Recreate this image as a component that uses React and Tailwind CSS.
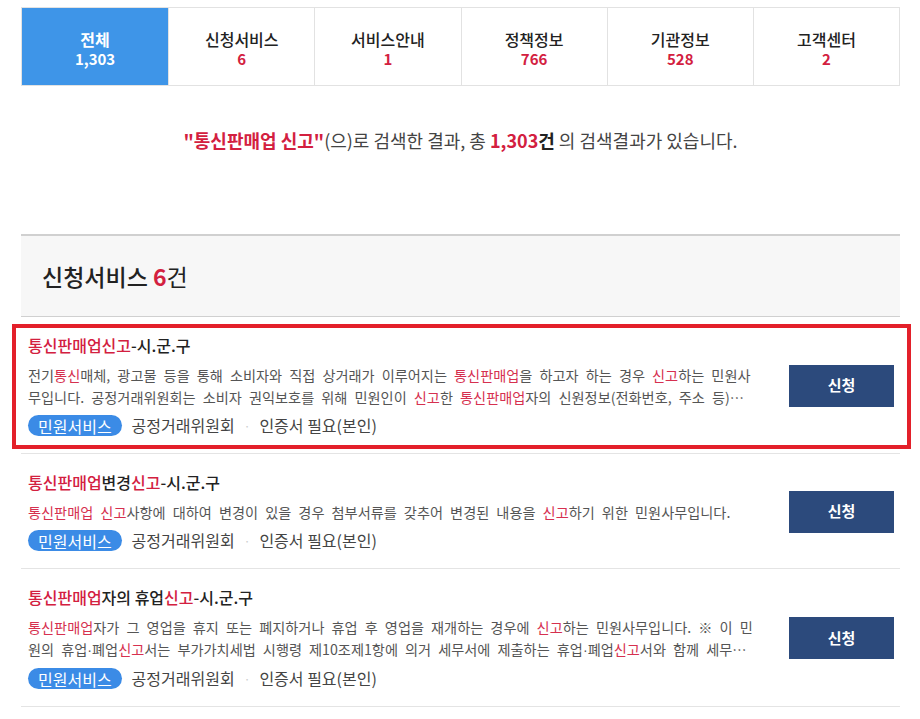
import React from "react";

const tabs = [
  { label: "전체", count: "1,303", active: true },
  { label: "신청서비스", count: "6" },
  { label: "서비스안내", count: "1" },
  { label: "정책정보", count: "766" },
  { label: "기관정보", count: "528" },
  { label: "고객센터", count: "2" },
];

// Splits text on [[...]] markers so keyword hits render in red;
// middle dots get a Latin face so they stay narrow
function Hl({ text, cls }) {
  const parts = text.split(/(\[\[.*?\]\]|·)/g);
  return (
    <>
      {parts.map((p, i) =>
        p.startsWith("[[") ? (
          <span key={i} className={cls}>
            {p.slice(2, -2)}
          </span>
        ) : p === "·" ? (
          <span key={i} className="font-['Liberation_Sans']">·</span>
        ) : (
          <React.Fragment key={i}>{p}</React.Fragment>
        )
      )}
    </>
  );
}

const items = [
  {
    title: "[[통신판매업신고]]-시.군.구",
    desc:
      "전기[[통신]]매체, 광고물 등을 통해 소비자와 직접 상거래가 이루어지는 [[통신판매업]]을 하고자 하는 경우 [[신고]]하는 민원사무입니다. 공정거래위원회는 소비자 권익보호를 위해 민원인이 [[신고]]한 [[통신판매업]]자의 신원정보(전화번호, 주소 등)를 공개하고 있습니다.",
    highlight: true,
  },
  {
    title: "[[통신판매업]]변경[[신고]]-시.군.구",
    desc:
      "[[통신판매업 신고]]사항에 대하여 변경이 있을 경우 첨부서류를 갖추어 변경된 내용을 [[신고]]하기 위한 민원사무입니다.",
  },
  {
    title: "[[통신판매업]]자의 휴업[[신고]]-시.군.구",
    desc:
      "[[통신판매업]]자가 그 영업을 휴지 또는 폐지하거나 휴업 후 영업을 재개하는 경우에 [[신고]]하는 민원사무입니다. ※ 이 민원의 휴업·폐업[[신고]]서는 부가가치세법 시행령 제10조제1항에 의거 세무서에 제출하는 휴업·폐업[[신고]]서와 함께 세무서에 제출할 수 있습니다.",
  },
];

function Item({ item }) {
  return (
    <div className="relative">
      {item.highlight && (
        <div className="pointer-events-none absolute left-[-9px] right-[-11px] top-[7px] bottom-[5px] border-[4px] border-[#e3202a]" />
      )}
      <div className="flex items-center border-b border-[#e4e4e4] pl-[7px] pr-[6px] pt-[18px] pb-[17px]">
        <div className="w-[729px]">
          <div className="text-[16px] leading-[20px] font-medium text-[#222]">
            <Hl text={item.title} cls="text-[#d3203f]" />
          </div>
          <p className="mt-[9px] text-[14.2px] leading-[22px] text-[#555] line-clamp-2 [word-spacing:3.9px]">
            <Hl text={item.desc} cls="text-[#d6304f]" />
          </p>
          <div className="mt-[7px] flex items-center text-[16px] leading-[21px] text-[#444]">
            <span className="inline-flex h-[21px] items-center rounded-full bg-[#3b8be6] px-[10px] text-[16px] leading-none text-white">
              민원서비스
            </span>
            <span className="ml-[10px]">공정거래위원회</span>
            <span className="mx-[9px] text-[#ccc] text-[12px]">·</span>
            <span>인증서 필요(본인)</span>
          </div>
        </div>
        <button className="ml-auto h-[42px] w-[105px] bg-[#2c4a7c] text-[15px] font-bold text-white">
          신청
        </button>
      </div>
    </div>
  );
}

export default function App() {
  return (
    <div className="min-h-[719px] bg-white font-['Noto_Sans_CJK_KR','Noto_Sans',sans-serif]">
      <div className="ml-[21px] w-[879px] pt-[7px]">
        {/* category tabs */}
        <div className="grid h-[79px] grid-cols-6 border border-[#e2e2e2]">
          {tabs.map((t) => (
            <div
              key={t.label}
              className={
                t.active
                  ? "flex flex-col items-center justify-center pt-[4px] bg-[#3e95e8] text-white"
                  : "flex flex-col items-center justify-center pt-[4px] border-l border-[#e2e2e2] text-[#222]"
              }
            >
              <span className={t.active ? "text-[16px] leading-[20px] font-bold" : "text-[16px] leading-[20px] font-medium"}>
                {t.label}
              </span>
              <span
                className={
                  t.active
                    ? "text-[15px] leading-[19px] font-bold"
                    : "text-[15px] leading-[19px] font-bold text-[#d3203f]"
                }
              >
                {t.count}
              </span>
            </div>
          ))}
        </div>

        {/* search summary */}
        <p className="mt-[42px] text-center text-[18px] leading-[24px] text-[#444]">
          <span className="font-bold text-[#d3203f]">"통신판매업 신고"</span>(으)로 검색한 결과, 총{" "}
          <span className="font-bold text-[#d3203f]">1,303</span>
          <span className="font-bold text-[#222]">건</span> 의 검색결과가 있습니다.
        </p>

        {/* section: 신청서비스 */}
        <div className="mt-[82px] flex h-[83px] items-center border-t-2 border-b border-[#d0d0d0] bg-[#f7f7f7] pl-[21px]">
          <h2 className="text-[23px] font-medium text-[#222]">
            신청서비스 <span className="font-bold text-[#d3203f]">6</span>
            <span className="font-normal">건</span>
          </h2>
        </div>

        {items.map((it, i) => (
          <Item key={i} item={it} />
        ))}
      </div>
    </div>
  );
}
